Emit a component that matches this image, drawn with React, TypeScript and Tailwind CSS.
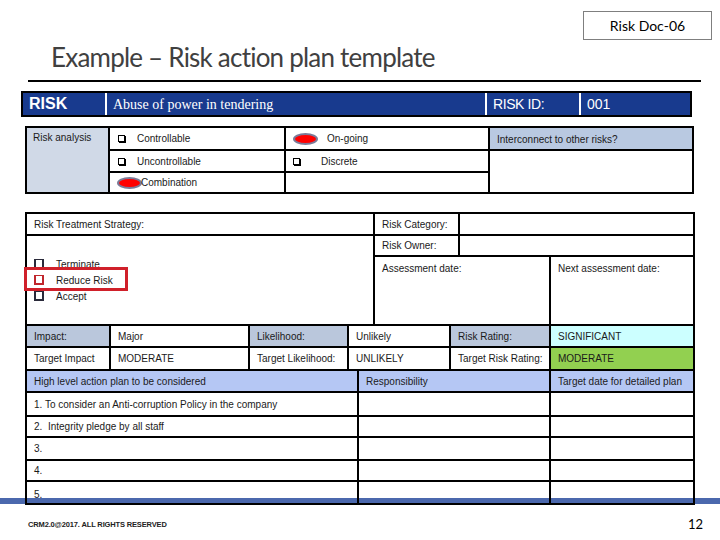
const cell = 'border-r-2 border-b-2 border-black flex items-center pl-[7px] whitespace-nowrap'

function Box() {
  return <span className="inline-block w-[7px] h-[7px] shrink-0 border border-black bg-white shadow-[1px_1px_0_#000]" />
}

function Oval() {
  return <span className="inline-block w-[25px] h-[12px] shrink-0 rounded-[50%] bg-[#ff0000] border-2 border-[#7a7a98]" />
}

function Square({ red }: { red?: boolean }) {
  return (
    <span
      className={
        red
          ? 'inline-block w-[10px] h-[10px] shrink-0 border-x-2 border-b-2 border-t border-[#c0262c]'
          : 'inline-block w-[10px] h-[10px] shrink-0 border-x-2 border-b-2 border-t border-[#2a2a3a]'
      }
    />
  )
}

export default function App() {
  return (
    <div className="relative w-[720px] h-[540px] overflow-hidden bg-white text-[#1a1a1a] font-['Liberation_Sans',Arial,sans-serif]">
      {/* doc tag */}
      <div className="flex justify-end pt-[11px] pr-[8px]">
        <div className="w-[129px] h-[29px] border border-[#7f7f7f] flex items-center justify-center text-[14px] font-['Lato',sans-serif] text-black">
          Risk Doc-06
        </div>
      </div>

      <h1 className="mt-[4px] ml-[51px] h-[26px] leading-[26px] text-[26px] tracking-[-0.03em] text-[#404040] font-['Lato',sans-serif]">
        Example – Risk action plan template
      </h1>
      <div className="mt-[10px] ml-[28px] w-[673px] h-[2px] bg-black" />

      {/* risk bar */}
      <div className="mt-[9px] ml-[21px] w-[671px] h-[26px] border-2 border-black bg-[#183a8e] flex text-white">
        <div className="w-[84px] border-r-2 border-white flex items-center pl-[6px] text-[16px] font-bold">RISK</div>
        <div className="w-[380px] border-r-2 border-white flex items-center pl-[6px] text-[14px] font-['Liberation_Serif',serif]">
          Abuse of power in tendering
        </div>
        <div className="w-[94px] border-r-2 border-white flex items-center pl-[6px] text-[14px] tracking-[-0.03em]">RISK ID:</div>
        <div className="flex-1 flex items-center pl-[6px] text-[14px]">001</div>
      </div>

      {/* risk analysis */}
      <div className="mt-[9px] ml-[25px] w-[669px] grid grid-cols-[83px_176px_204px_204px] grid-rows-[23px_22px_21px] border-l-2 border-t-2 border-black text-[10px]">
        <div className="row-span-3 bg-[#d0d9e7] border-r-2 border-b-2 border-black pl-[6px] pt-[2px]">Risk analysis</div>
        <div className={cell + ' pl-[8px]'}>
          <Box />
          <span className="ml-[12px]">Controllable</span>
        </div>
        <div className={cell + ' pl-[0px]'}>
          <Oval />
          <span className="ml-[9px]">On-going</span>
        </div>
        <div className={cell + ' bg-[#b9c9e1] items-start pt-[4px]'}>Interconnect to other risks?</div>
        <div className={cell + ' pl-[8px]'}>
          <Box />
          <span className="ml-[12px]">Uncontrollable</span>
        </div>
        <div className={cell + ' pl-[7px]'}>
          <Box />
          <span className="ml-[21px]">Discrete</span>
        </div>
        <div className="row-span-2 border-r-2 border-b-2 border-black" />
        <div className={cell + ' pl-[3px]'}>
          <Oval />
          <span className="-ml-[1px]">Combination</span>
        </div>
        <div className={cell} />
      </div>

      {/* treatment, ratings and plan */}
      <div className="relative z-10 mt-[18px] ml-[25px] w-[670px] border-l-2 border-t-2 border-black text-[10px]">
        <div className="grid grid-cols-[348px_85px_91px_144px] grid-rows-[22px_21px_69px]">
          <div className={cell + ' pl-[6px] items-start pt-[3px]'}>Risk Treatment Strategy:</div>
          <div className={cell + ' items-start pt-[3px]'}>Risk Category:</div>
          <div className="col-span-2 border-r-2 border-b-2 border-black" />
          <div className="row-span-2 border-r-2 border-b-2 border-black pl-[7px] pt-[20px] flex flex-col">
            <div className="h-[16px] flex items-center gap-[12px]">
              <Square />
              <span>Terminate</span>
            </div>
            <div className="h-[16px] flex items-center gap-[12px]">
              <Square red />
              <span>Reduce Risk</span>
            </div>
            <div className="h-[16px] flex items-center gap-[12px]">
              <Square />
              <span>Accept</span>
            </div>
          </div>
          <div className={cell}>Risk Owner:</div>
          <div className="col-span-2 border-r-2 border-b-2 border-black" />
          <div className={cell + ' col-span-2 items-start pt-[4px]'}>Assessment date:</div>
          <div className={cell + ' items-start pt-[4px]'}>Next assessment date:</div>
        </div>

        <div className="grid grid-cols-[84px_139px_99px_102px_100px_144px] grid-rows-[22px_23px]">
          <div className={cell + ' pl-[6px] bg-[#bac7dc]'}>Impact:</div>
          <div className={cell}>Major</div>
          <div className={cell + ' bg-[#bac7dc]'}>Likelihood:</div>
          <div className={cell + ' pl-[6px]'}>Unlikely</div>
          <div className={cell + ' bg-[#bac7dc]'}>Risk Rating:</div>
          <div className={cell + ' bg-[#ccffff]'}>SIGNIFICANT</div>
          <div className={cell + ' pl-[6px]'}>Target Impact</div>
          <div className={cell}>MODERATE</div>
          <div className={cell}>Target Likelihood:</div>
          <div className={cell + ' pl-[6px]'}>UNLIKELY</div>
          <div className={cell}>Target Risk Rating:</div>
          <div className={cell + ' bg-[#92d050]'}>MODERATE</div>
        </div>

        <div className="grid grid-cols-[332px_192px_144px] grid-rows-[22px_24px_21px_23px_21px_23px]">
          <div className={cell + ' pl-[6px] bg-[#b5c7f4]'}>High level action plan to be considered</div>
          <div className={cell + ' bg-[#b5c7f4]'}>Responsibility</div>
          <div className={cell + ' bg-[#b5c7f4]'}>Target date for detailed plan</div>
          <div className={cell + ' pl-[6px]'}>1. To consider an Anti-corruption Policy in the company</div>
          <div className={cell} />
          <div className={cell} />
          <div className={cell + ' pl-[6px]'}>2.&nbsp; Integrity pledge by all staff</div>
          <div className={cell} />
          <div className={cell} />
          <div className={cell + ' pl-[6px]'}>3.</div>
          <div className={cell} />
          <div className={cell} />
          <div className={cell + ' pl-[6px]'}>4.</div>
          <div className={cell} />
          <div className={cell} />
          <div className={cell + ' pl-[6px] items-start pt-[5px]'}>5.</div>
          <div className={cell} />
          <div className={cell} />
        </div>
      </div>

      {/* footer */}
      <div className="mt-[10px] pl-[28px] pr-[17px] flex items-center justify-between">
        <span className="text-[7.5px] font-semibold tracking-[-0.02em] text-[#222]">CRM2.0@2017. ALL RIGHTS RESERVED</span>
        <span className="text-[13px] font-['Lato',sans-serif] text-black">12</span>
      </div>

      {/* blue rule behind the table bottom */}
      <div className="absolute left-0 top-[498px] w-[720px] h-[6px] bg-[#4b68ad]" />

      {/* highlight around chosen strategy */}
      <div className="absolute z-20 left-[24px] top-[267px] w-[104px] h-[24px] border-[3px] border-[#d0202a]" />
    </div>
  )
}
